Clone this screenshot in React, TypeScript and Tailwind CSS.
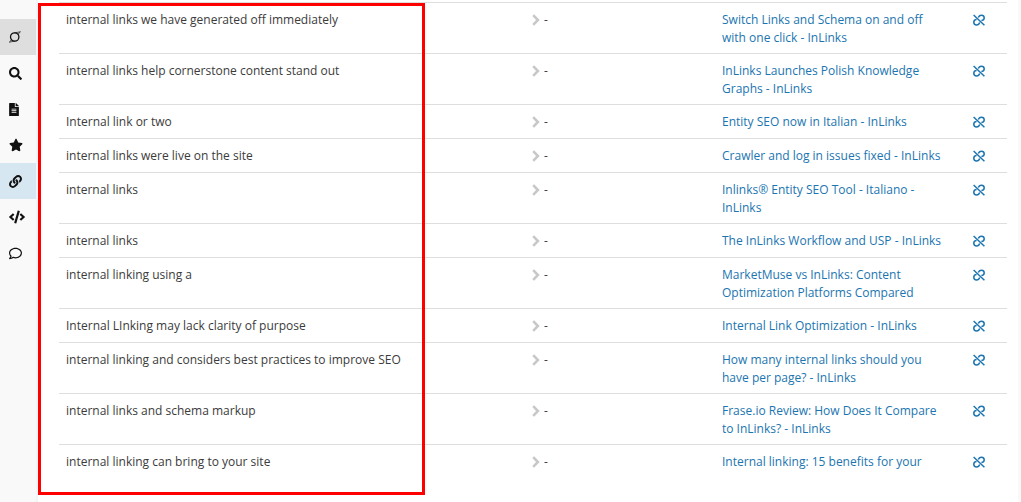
import React from "react";
import { FaSearch, FaFileAlt, FaStar, FaLink, FaCode, FaRegComment } from "react-icons/fa";

type Row = { anchor: string; page: string[] };

const rows: Row[] = [
  { anchor: "internal links we have generated off immediately", page: ["Switch Links and Schema on and off", "with one click - InLinks"] },
  { anchor: "internal links help cornerstone content stand out", page: ["InLinks Launches Polish Knowledge", "Graphs - InLinks"] },
  { anchor: "Internal link or two", page: ["Entity SEO now in Italian - InLinks"] },
  { anchor: "internal links were live on the site", page: ["Crawler and log in issues fixed - InLinks"] },
  { anchor: "internal links", page: ["Inlinks® Entity SEO Tool - Italiano -", "InLinks"] },
  { anchor: "internal links", page: ["The InLinks Workflow and USP - InLinks"] },
  { anchor: "internal linking using a", page: ["MarketMuse vs InLinks: Content", "Optimization Platforms Compared"] },
  { anchor: "Internal LInking may lack clarity of purpose", page: ["Internal Link Optimization - InLinks"] },
  { anchor: "internal linking and considers best practices to improve SEO", page: ["How many internal links should you", "have per page? - InLinks"] },
  { anchor: "internal links and schema markup", page: ["Frase.io Review: How Does It Compare", "to InLinks? - InLinks"] },
  { anchor: "internal linking can bring to your site", page: ["Internal linking: 15 benefits for your"] },
];

function LogoIcon() {
  return (
    <svg viewBox="0 0 12 12" className="h-3 w-3" fill="none" stroke="currentColor" strokeLinecap="round" aria-hidden="true">
      <circle cx="5.7" cy="6" r="4.2" strokeWidth="1.3" />
      <path d="M5.7 1.7C7.8 1.6 9.6 1.2 11.4.7L9.3 3M5.7 10.3C3.6 10.4 2 10.8.4 11.3L2.1 9" strokeWidth="0.7" />
    </svg>
  );
}

function UnlinkIcon() {
  return (
    <svg viewBox="0 0 12 12" className="h-3 w-3" fill="none" stroke="currentColor" strokeWidth="1.5" aria-hidden="true">
      <path d="M.6 1 11.4 11.2" />
      <path d="M5.3 3.6C5.8 2.1 7 1.2 8.4 1.2c1.6 0 2.8 1.1 2.8 2.6 0 1.6-1.3 2.6-2.8 2.7" />
      <path d="M3.6 5.5C1.9 5.6.8 6.7.8 8.3c0 1.5 1.2 2.6 2.8 2.6 1.5 0 2.6-.9 3.1-2.4" />
    </svg>
  );
}

function ChevronIcon() {
  return (
    <svg viewBox="0 0 8 12" className="h-3 w-2" fill="none" stroke="currentColor" strokeWidth="2.6" aria-hidden="true">
      <path d="M1.2 1.2 5.9 6 1.2 10.8" />
    </svg>
  );
}

const navItems = [
  { label: "InLinks", icon: <LogoIcon />, tone: "bg-[#dedede]" },
  { label: "Search", icon: <FaSearch size={13} />, tone: "" },
  { label: "Content", icon: <FaFileAlt size={13} className="w-[10px]" />, tone: "" },
  { label: "Favorites", icon: <FaStar size={14} />, tone: "" },
  { label: "Links", icon: <FaLink size={13} />, tone: "bg-[#d6e7f1]" },
  { label: "Code", icon: <FaCode size={16} />, tone: "" },
  { label: "Comments", icon: <FaRegComment size={13} />, tone: "" },
];

export default function App() {
  return (
    <div className="relative flex min-h-screen bg-white font-['Open_Sans','Noto_Sans',sans-serif] text-xs leading-[18px] text-[#3b3b3b]">
      <nav aria-label="Main" className="w-9 shrink-0 bg-[#f9f9f9] pt-[19px] text-[#111111]">
        {navItems.map((item) => (
          <a key={item.label} href="#" aria-label={item.label} className={`flex h-9 items-center pl-[9px] ${item.tone}`}>
            {item.icon}
          </a>
        ))}
      </nav>
      <main className="min-w-0 flex-1 border-l-2 border-[#f0f5f7] pt-0.5 pr-[11px] pl-[21px]">
        <table className="w-full table-fixed border-collapse" aria-label="Internal links">
          <colgroup>
            <col />
            <col className="w-[190px]" />
            <col className="w-[244px]" />
            <col className="w-12" />
          </colgroup>
          <tbody>
            {rows.map((row, i) => (
              <tr key={i} className="h-[34px] border-t border-[#dedede] align-top">
                <td className="px-[7px] pt-2 pb-1.5">{row.anchor}</td>
                <td className="px-[7px] pt-2 pb-1.5">
                  <span className="flex h-[18px] items-center gap-1">
                    <span className="text-[#c8c8c8]"><ChevronIcon /></span>
                    <span>-</span>
                  </span>
                </td>
                <td className="pt-2 pb-1.5 pl-[7px] whitespace-nowrap">
                  <a href="#" className="text-[#1b75b0]">
                    {row.page.map((line) => (
                      <span key={line} className="block">{line}</span>
                    ))}
                  </a>
                </td>
                <td className="pt-2 pl-[14px]">
                  <button type="button" aria-label="Remove link" className="flex h-[18px] items-center text-[#1b75b0]">
                    <UnlinkIcon />
                  </button>
                </td>
              </tr>
            ))}
          </tbody>
        </table>
      </main>
      <div className="w-[3px] shrink-0 bg-[#f9f9f9]" />
      <div className="pointer-events-none absolute top-[3px] bottom-[7px] left-[38px] w-[387px] border-3 border-[#ff0000]" />
    </div>
  );
}
